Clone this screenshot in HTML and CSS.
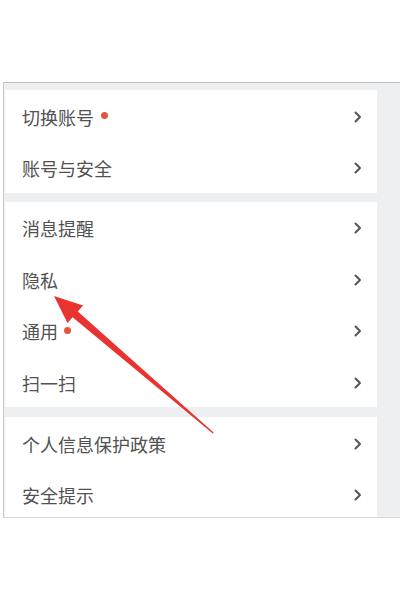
FILE: index.html
```html
<!DOCTYPE html>
<html lang="zh-CN">
<head>
<meta charset="utf-8">
<title>设置</title>
<link rel="stylesheet" href="styles.css">
</head>
<body>
<div class="panel">
  <div class="group">
    <div class="row"><span class="label">切换账号</span><span class="dot"></span><svg class="chev" viewBox="0 0 8 12"><polyline points="1.5,1.5 6,6 1.5,10.5"/></svg></div>
    <div class="row"><span class="label">账号与安全</span><svg class="chev" viewBox="0 0 8 12"><polyline points="1.5,1.5 6,6 1.5,10.5"/></svg></div>
  </div>
  <div class="group">
    <div class="row"><span class="label">消息提醒</span><svg class="chev" viewBox="0 0 8 12"><polyline points="1.5,1.5 6,6 1.5,10.5"/></svg></div>
    <div class="row"><span class="label">隐私</span><svg class="chev" viewBox="0 0 8 12"><polyline points="1.5,1.5 6,6 1.5,10.5"/></svg></div>
    <div class="row"><span class="label">通用</span><span class="dot dot-near"></span><svg class="chev" viewBox="0 0 8 12"><polyline points="1.5,1.5 6,6 1.5,10.5"/></svg></div>
    <div class="row"><span class="label">扫一扫</span><svg class="chev" viewBox="0 0 8 12"><polyline points="1.5,1.5 6,6 1.5,10.5"/></svg></div>
  </div>
  <div class="group">
    <div class="row"><span class="label">个人信息保护政策</span><svg class="chev" viewBox="0 0 8 12"><polyline points="1.5,1.5 6,6 1.5,10.5"/></svg></div>
    <div class="row"><span class="label">安全提示</span><svg class="chev" viewBox="0 0 8 12"><polyline points="1.5,1.5 6,6 1.5,10.5"/></svg></div>
  </div>
</div>
<svg class="arrow" viewBox="0 0 400 600" width="400" height="600">
  <polygon points="54,296 83,305.5 77.8,311.4 213.6,432.6 212.8,433.6 72.6,317.2 67.5,323"/>
</svg>
</body>
</html>
```
FILE: styles.css
```css
html, body {
  margin: 0;
  padding: 0;
  background: #ffffff;
}
body {
  width: 400px;
  height: 600px;
  overflow: hidden;
  position: relative;
  font-family: "Noto Sans CJK SC", "Noto Sans", sans-serif;
}
.panel {
  margin: 82px 0 0 3px;
  border-top: 1px solid #c2c2c2;
  border-left: 1px solid #c8c8c8;
  border-bottom: 1px solid #d8d8d8;
  background: #eeeff1;
  height: 427px;
  padding: 7px 23px 0 1px;
  overflow: hidden;
  display: flex;
  flex-direction: column;
  gap: 9px;
}
.group {
  background: #ffffff;
  display: flex;
  flex-direction: column;
  flex-shrink: 0;
}
.group + .group + .group {
  margin-top: 1px;
}
.row {
  height: 51.4px;
  box-sizing: border-box;
  padding: 2px 15px 0 17px;
  display: flex;
  align-items: center;
}
.label {
  font-size: 18px;
  line-height: 24px;
  color: #525252;
}
.dot {
  width: 7px;
  height: 7px;
  border-radius: 50%;
  background: #e2553f;
  margin-left: 7px;
  margin-bottom: 2px;
}
.dot-near {
  margin-left: 6px;
}
.chev {
  width: 8px;
  height: 12px;
  margin-left: auto;
}
.chev polyline {
  fill: none;
  stroke: #555555;
  stroke-width: 2;
  stroke-linecap: round;
  stroke-linejoin: round;
}
.arrow {
  position: absolute;
  left: 0;
  top: 0;
  pointer-events: none;
}
.arrow polygon {
  fill: #e8332f;
}
```
